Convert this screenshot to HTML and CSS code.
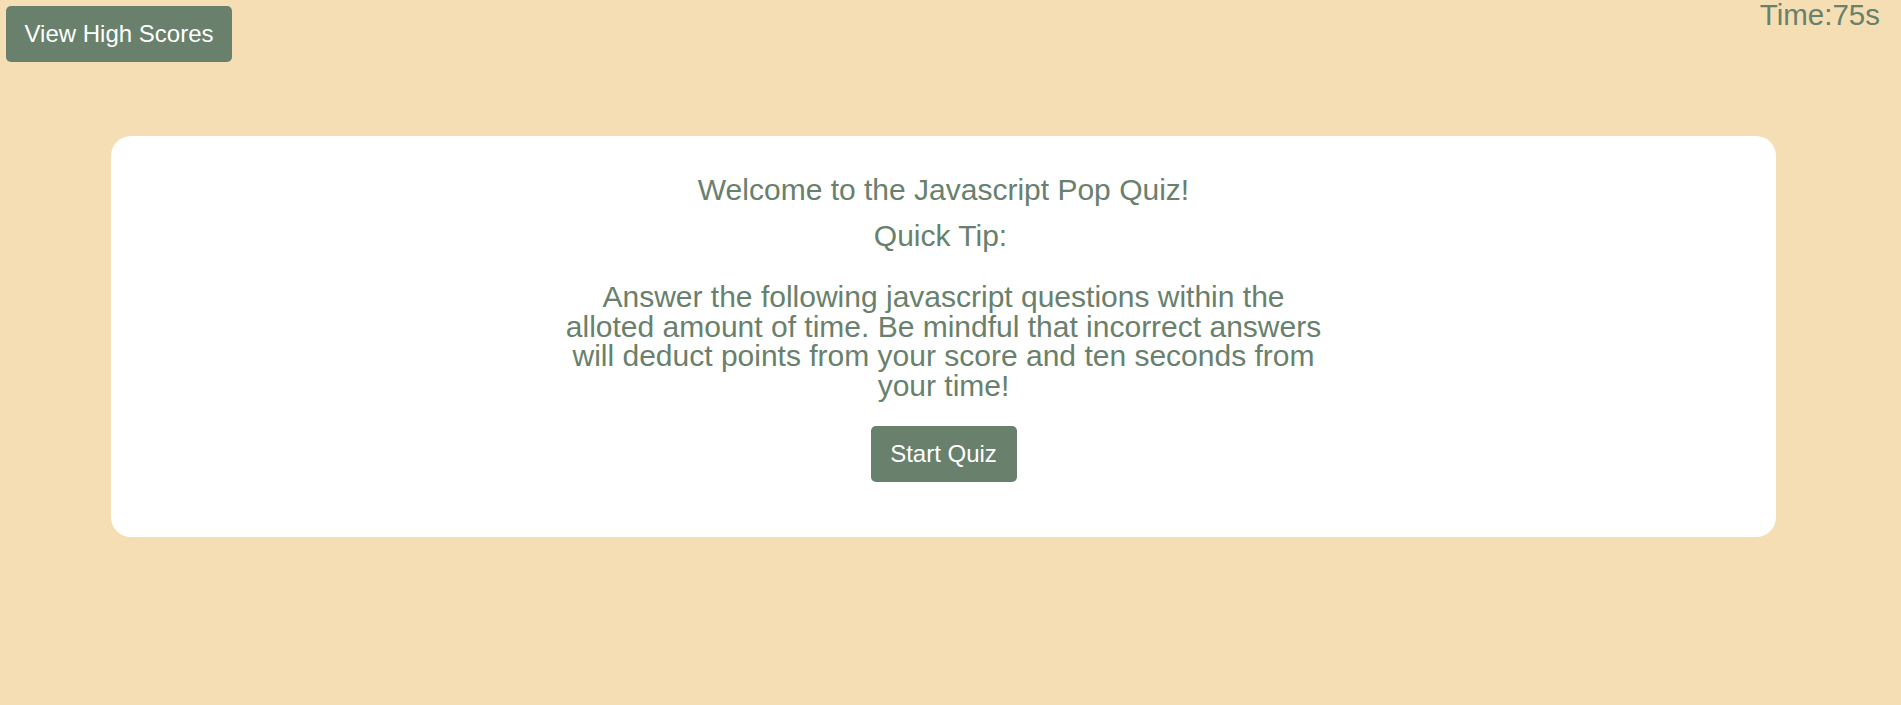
FILE: index.html
```html
<!DOCTYPE html>
<html lang="en">
<head>
<meta charset="utf-8">
<title>Javascript Pop Quiz</title>
<link rel="stylesheet" href="styles.css">
</head>
<body>
  <header class="top-bar">
    <button class="btn btn-scores" type="button">View High Scores</button>
    <div class="timer">Time:75s</div>
  </header>
  <main class="card">
    <h1 class="title">Welcome to the Javascript Pop Quiz!</h1>
    <h2 class="subtitle">Quick Tip:</h2>
    <p class="tip">Answer the following javascript questions within the alloted amount of time. Be mindful that incorrect answers will deduct points from your score and ten seconds from your time!</p>
    <button class="btn btn-start" type="button">Start Quiz</button>
  </main>
</body>
</html>
```
FILE: styles.css
```css
html, body {
  margin: 0;
  padding: 0;
}

body {
  background: #f5deb3;
  font-family: "Liberation Sans", Arial, sans-serif;
  color: #68806c;
  min-height: 705px;
}

.top-bar {
  display: flex;
  justify-content: space-between;
  align-items: flex-start;
  padding: 0 21px 0 6px;
}

.btn {
  font-family: "Liberation Sans", Arial, sans-serif;
  font-size: 24px;
  line-height: 28px;
  color: #ffffff;
  background: #68806c;
  border: none;
  border-radius: 5px;
  padding: 14px 0;
  white-space: nowrap;
  cursor: pointer;
}

.btn-scores {
  margin-top: 6px;
  width: 226px;
  height: 56px;
}

.timer {
  font-size: 29.5px;
  line-height: 1;
  margin-top: 0;
}

.card {
  margin: 74px 125px 0 111px;
  background: #ffffff;
  border-radius: 20px;
  height: 401px;
  box-sizing: border-box;
  padding-top: 37px;
  display: flex;
  flex-direction: column;
  align-items: center;
  text-align: center;
}

.title,
.subtitle {
  font-size: 30px;
  font-weight: normal;
  line-height: 34.5px;
  margin: 0;
}

.subtitle {
  margin-top: 11px;
  padding-right: 6px;
}

.tip {
  font-size: 30px;
  line-height: 29.6px;
  width: 765px;
  margin: 29px 0 0;
}

.btn-start {
  margin-top: 26px;
  width: 146px;
  height: 56px;
}
```
